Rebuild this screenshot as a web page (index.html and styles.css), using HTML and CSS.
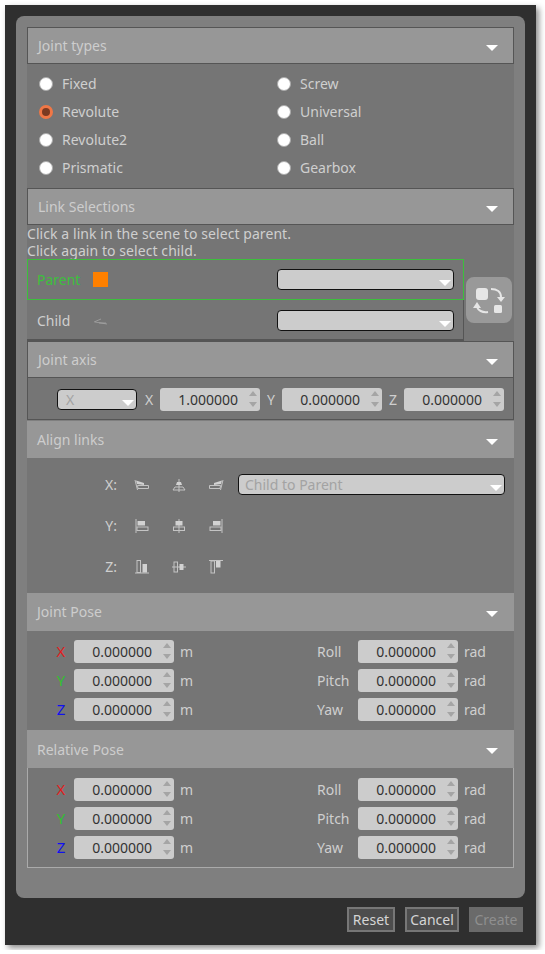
FILE: index.html
```html
<!DOCTYPE html>
<html lang="en">
<head>
  <meta charset="UTF-8">
  <meta name="viewport" content="width=device-width, initial-scale=1.0">
  <title>Joint creation</title>
  <link rel="stylesheet" href="styles.css">
</head>
<body>
  <div class="window">
    <div class="card">

      <div class="header"><span>Joint types</span><i class="arrow"></i></div>
      <div class="radios">
        <div class="radio"><i class="dot"></i>Fixed</div>
        <div class="radio"><i class="dot"></i>Screw</div>
        <div class="radio"><i class="dot checked"></i>Revolute</div>
        <div class="radio"><i class="dot"></i>Universal</div>
        <div class="radio"><i class="dot"></i>Revolute2</div>
        <div class="radio"><i class="dot"></i>Ball</div>
        <div class="radio"><i class="dot"></i>Prismatic</div>
        <div class="radio"><i class="dot"></i>Gearbox</div>
      </div>

      <div class="header"><span>Link Selections</span><i class="arrow"></i></div>
      <div class="hint">Click a link in the scene to select parent.<br>Click again to select child.</div>
      <div class="links">
        <div class="link-rows">
          <div class="link-row parent">
            <span class="link-name">Parent</span>
            <i class="swatch"></i>
            <div class="combo link-combo"><i class="combo-arrow"></i></div>
          </div>
          <div class="link-row child">
            <span class="link-name">Child</span>
            <svg class="thumb" width="15" height="15" viewBox="0 0 15 15"><path d="M1 9 L8 6 M2 9 L14 11 M6 10 L13 10" stroke="#aaa" stroke-width="0.7" fill="none"/></svg>
            <div class="combo link-combo"><i class="combo-arrow"></i></div>
          </div>
        </div>
        <div class="swap">
          <svg width="46" height="46" viewBox="0 0 46 46">
            <rect x="10" y="11" width="12" height="12" rx="3" fill="#e6e6e6"/>
            <rect x="28" y="28" width="8" height="8" rx="1.5" fill="#e6e6e6"/>
            <path d="M25 12 C31 12 35 15 35 20" stroke="#e6e6e6" stroke-width="2" fill="none"/>
            <path d="M31 20 L39 20 L35 25 Z" fill="#e6e6e6"/>
            <path d="M22 35 C16 36 12 33 11 30" stroke="#e6e6e6" stroke-width="2" fill="none"/>
            <path d="M7 31 L15 31 L11 25 Z" fill="#e6e6e6"/>
          </svg>
        </div>
      </div>

      <div class="header"><span>Joint axis</span><i class="arrow"></i></div>
      <div class="axis-row">
        <div class="combo axis-combo">X<i class="combo-arrow"></i></div>
        <span class="axis-label">X</span>
        <div class="spin">1.000000<i class="spin-arrows"></i></div>
        <span class="axis-label">Y</span>
        <div class="spin">0.000000<i class="spin-arrows"></i></div>
        <span class="axis-label">Z</span>
        <div class="spin">0.000000<i class="spin-arrows"></i></div>
      </div>

      <div class="header align-header"><span>Align links</span><i class="arrow"></i></div>
      <div class="align">
        <div class="align-row">
          <span class="align-label">X:</span>
          <svg class="align-icon" viewBox="0 0 16 16"><path d="M1 3 L3.5 13" class="line"/><path d="M2 3.5 L10 6 L10 8 L3 7 Z" class="solid"/><path d="M3.5 8.5 L14.5 8.5 L14.5 11.5 L4 11.5 Z" class="hollow"/></svg>
          <svg class="align-icon" viewBox="0 0 16 16"><path d="M8 2 L8 15" class="line"/><path d="M6 5 L10 5 L11 8 L5 8 Z" class="solid"/><path d="M4 10 L12 10 L14 13 L2 13 Z" class="hollow"/></svg>
          <svg class="align-icon" viewBox="0 0 16 16"><path d="M15 3 L12.5 13" class="line"/><path d="M14 3.5 L6 6 L6 8 L13 7 Z" class="solid"/><path d="M12.5 8.5 L1.5 8.5 L1.5 11.5 L12 11.5 Z" class="hollow"/></svg>
          <div class="combo align-combo">Child to Parent<i class="combo-arrow"></i></div>
        </div>
        <div class="align-row">
          <span class="align-label">Y:</span>
          <svg class="align-icon" viewBox="0 0 16 16"><path d="M2 1 L2 15" class="line"/><rect x="3.5" y="3" width="7.5" height="4.5" class="solid"/><rect x="3" y="9" width="11" height="3.5" class="hollow"/></svg>
          <svg class="align-icon" viewBox="0 0 16 16"><path d="M8 1 L8 15" class="line"/><rect x="4.5" y="3" width="7" height="4.5" class="solid"/><rect x="2.5" y="9" width="11" height="3.5" class="hollow"/></svg>
          <svg class="align-icon" viewBox="0 0 16 16"><path d="M14 1 L14 15" class="line"/><rect x="5" y="3" width="7.5" height="4.5" class="solid"/><rect x="2" y="9" width="11" height="3.5" class="hollow"/></svg>
        </div>
        <div class="align-row">
          <span class="align-label">Z:</span>
          <svg class="align-icon" viewBox="0 0 16 16"><path d="M1 14 L15 14" class="line"/><rect x="3" y="1.5" width="3.5" height="12" class="hollow"/><rect x="8.5" y="5" width="4.5" height="8.5" class="solid"/></svg>
          <svg class="align-icon" viewBox="0 0 16 16"><path d="M1 8 L15 8" class="line"/><rect x="3" y="3" width="3.5" height="10" class="hollow"/><rect x="8.5" y="5" width="4" height="6" class="solid"/></svg>
          <svg class="align-icon" viewBox="0 0 16 16"><path d="M1 1.5 L15 1.5" class="line"/><rect x="3" y="2" width="3.5" height="12" class="hollow"/><rect x="8" y="2" width="4.5" height="6.5" class="solid"/></svg>
        </div>
      </div>

      <div class="header pose-header first-pose"><span>Joint Pose</span><i class="arrow"></i></div>
      <div class="pose">
        <div class="pose-row"><span class="coord red">X</span><div class="spin">0.000000<i class="spin-arrows"></i></div><span class="unit">m</span><span class="rot">Roll</span><div class="spin">0.000000<i class="spin-arrows"></i></div><span class="unit">rad</span></div>
        <div class="pose-row"><span class="coord green">Y</span><div class="spin">0.000000<i class="spin-arrows"></i></div><span class="unit">m</span><span class="rot">Pitch</span><div class="spin">0.000000<i class="spin-arrows"></i></div><span class="unit">rad</span></div>
        <div class="pose-row"><span class="coord blue">Z</span><div class="spin">0.000000<i class="spin-arrows"></i></div><span class="unit">m</span><span class="rot">Yaw</span><div class="spin">0.000000<i class="spin-arrows"></i></div><span class="unit">rad</span></div>
      </div>

      <div class="header pose-header"><span>Relative Pose</span><i class="arrow"></i></div>
      <div class="pose relative">
        <div class="pose-row"><span class="coord red">X</span><div class="spin">0.000000<i class="spin-arrows"></i></div><span class="unit">m</span><span class="rot">Roll</span><div class="spin">0.000000<i class="spin-arrows"></i></div><span class="unit">rad</span></div>
        <div class="pose-row"><span class="coord green">Y</span><div class="spin">0.000000<i class="spin-arrows"></i></div><span class="unit">m</span><span class="rot">Pitch</span><div class="spin">0.000000<i class="spin-arrows"></i></div><span class="unit">rad</span></div>
        <div class="pose-row"><span class="coord blue">Z</span><div class="spin">0.000000<i class="spin-arrows"></i></div><span class="unit">m</span><span class="rot">Yaw</span><div class="spin">0.000000<i class="spin-arrows"></i></div><span class="unit">rad</span></div>
      </div>

    </div>

    <div class="footer">
      <button class="btn">Reset</button>
      <button class="btn">Cancel</button>
      <button class="btn disabled">Create</button>
    </div>
  </div>
</body>
</html>
```
FILE: styles.css
```css
body {
  margin: 0;
  background-color: #fff;
  font-family: "Noto Sans", Arial, sans-serif;
  font-size: 14px;
  color: #cfcfcf;
  overflow: hidden;
}

.window {
  box-sizing: border-box;
  width: 531px;
  height: 940px;
  margin: 5px;
  padding: 11px;
  background-color: #2f2f2f;
  box-shadow: 3px 3px 6px rgba(0, 0, 0, 0.45);
}

.card {
  box-sizing: border-box;
  height: 882px;
  padding: 11px;
  background-color: #7f7f7f;
  border-radius: 8px;
}

/* Section headers */
.header {
  box-sizing: border-box;
  display: flex;
  align-items: center;
  justify-content: space-between;
  height: 37px;
  padding: 0 15px 0 10px;
  background-color: #979797;
  border: 1px solid #555;
  color: #cdcdcd;
}

.arrow {
  width: 0;
  height: 0;
  margin-top: 4px;
  border-left: 6px solid transparent;
  border-right: 6px solid transparent;
  border-top: 6px solid #fff;
}

.align-header {
  margin-top: 1px;
  border: 0;
  padding-left: 10px;
  padding-right: 16px;
}

.pose-header {
  height: 38px;
  border: 0;
  padding-left: 10px;
  padding-right: 16px;
}

.first-pose span {
  margin-bottom: 2px;
}

/* Joint types */
.radios {
  display: grid;
  grid-template-columns: 238px 1fr;
  grid-auto-rows: 28px;
  height: 124px;
  box-sizing: border-box;
  padding: 6px 0 6px 12px;
  background-color: #757575;
}

.radio {
  display: flex;
  align-items: center;
  padding-bottom: 2px;
}

.dot {
  box-sizing: border-box;
  width: 14px;
  height: 14px;
  margin: 2px 9px 0 0;
  background-color: #fff;
  border: 1px solid #aaa;
  border-radius: 50%;
}

.dot.checked {
  background-color: #7a3a22;
  border: 3px solid #f07746;
}

/* Link selection */
.hint {
  height: 34px;
  line-height: 17px;
  letter-spacing: 0.07px;
  background-color: #757575;
}

.links {
  display: flex;
  align-items: center;
  background-color: #757575;
}

.link-rows {
  width: 437px;
}

.link-row {
  box-sizing: border-box;
  display: flex;
  align-items: center;
  height: 41px;
  padding: 0 10px 0 10px;
}

.link-row.parent {
  border: 1px solid #3cc03c;
  padding-left: 9px;
  padding-right: 9px;
}

.link-row.parent .link-name {
  color: #3cc03c;
}

.link-row.child {
  border-right: 1px solid #555;
  border-bottom: 2px solid #555;
  padding-top: 2px;
  padding-right: 9px;
}

.link-name {
  width: 56px;
}

.swatch {
  width: 15px;
  height: 15px;
  background-color: #ff8000;
}

.thumb {
  display: block;
}

.swap {
  width: 46px;
  height: 46px;
  margin-left: 2px;
  background-color: #999;
  border-radius: 8px;
}

.swap svg {
  display: block;
}

/* Combos and spin boxes */
.combo {
  box-sizing: border-box;
  position: relative;
  height: 21px;
  line-height: 19px;
  padding-left: 6px;
  background-color: #ccc;
  border: 1px solid #111;
  border-radius: 4px;
  color: #a3a3a3;
}

.combo-arrow {
  position: absolute;
  right: 2px;
  bottom: 3px;
  width: 0;
  height: 0;
  border-left: 6px solid transparent;
  border-right: 6px solid transparent;
  border-top: 6px solid #fff;
}

.link-combo {
  width: 177px;
  margin-left: auto;
}

.axis-combo {
  width: 80px;
  margin-right: 1px;
  padding-left: 8px;
}

.align-combo {
  width: 267px;
  margin-left: 14px;
}

.spin {
  box-sizing: border-box;
  position: relative;
  width: 100px;
  height: 23px;
  line-height: 23px;
  padding-right: 22px;
  text-align: right;
  background-color: #ccc;
  border-radius: 3px;
  color: #333;
}

.spin-arrows {
  position: absolute;
  right: 3px;
  top: 3px;
  width: 0;
  height: 0;
  border-left: 4px solid transparent;
  border-right: 4px solid transparent;
  border-bottom: 5px solid #a5a5a5;
}

.spin-arrows::after {
  content: "";
  position: absolute;
  left: -4px;
  top: 11px;
  width: 0;
  height: 0;
  border-left: 4px solid transparent;
  border-right: 4px solid transparent;
  border-top: 5px solid #a5a5a5;
}

/* Joint axis */
.axis-row {
  box-sizing: border-box;
  display: flex;
  align-items: center;
  height: 42px;
  padding: 1px 0 0 29px;
  background-color: #757575;
  border: 1px solid #555;
  border-top: 0;
}

.axis-label {
  width: 22px;
  text-align: center;
}

/* Align links */
.align {
  box-sizing: border-box;
  height: 135px;
  padding-top: 16px;
  background-color: #757575;
}

.align-row {
  display: flex;
  align-items: center;
  height: 21px;
  margin-bottom: 20px;
}

.align-label {
  width: 90px;
  text-align: right;
  margin-right: 17px;
}

.align-icon {
  width: 16px;
  height: 16px;
  margin-right: 21px;
}

.align-icon:nth-of-type(3) {
  margin-right: 0;
}

.line,
.hollow {
  fill: none;
  stroke: #c4c4c4;
  stroke-width: 1;
}

.solid {
  fill: #d2d2d2;
  stroke: none;
}

/* Pose */
.pose {
  box-sizing: border-box;
  display: flex;
  flex-direction: column;
  gap: 6px;
  height: 99px;
  padding: 9px 0 0 20px;
  background-color: #757575;
}

.pose.relative {
  height: 100px;
  padding-top: 10px;
  padding-left: 19px;
  border: 1px solid #aaa;
  border-top: 0;
}

.pose-row {
  display: flex;
  align-items: center;
}

.coord {
  width: 28px;
  margin-bottom: 2px;
  font-size: 15px;
  text-align: center;
}

.spin + .unit {
  margin-left: 6px;
}

.red {
  color: #e02020;
}

.green {
  color: #30c030;
}

.blue {
  color: #1010f0;
}

.rot {
  width: 41px;
  margin-left: auto;
}

.pose-row .unit:last-child {
  width: 50px;
}

.relative .pose-row .unit:last-child {
  width: 49px;
}

.coord + .spin {
  margin-left: -1px;
}

/* Footer buttons */
.footer {
  display: flex;
  justify-content: flex-end;
  gap: 10px;
  margin: 9px 2px 0 0;
}

.btn {
  box-sizing: border-box;
  height: 25px;
  min-width: 48px;
  padding: 0 3px;
  background-color: #4d4d4d;
  border: 2px solid #777;
  font-family: "Noto Sans", Arial, sans-serif;
  font-size: 14px;
  color: #d5d5d5;
}

.btn:nth-child(2),
.btn.disabled {
  width: 54px;
}

.btn.disabled {
  background-color: #6a6a6a;
  border-color: #6a6a6a;
  color: #8f8f8f;
}
```
